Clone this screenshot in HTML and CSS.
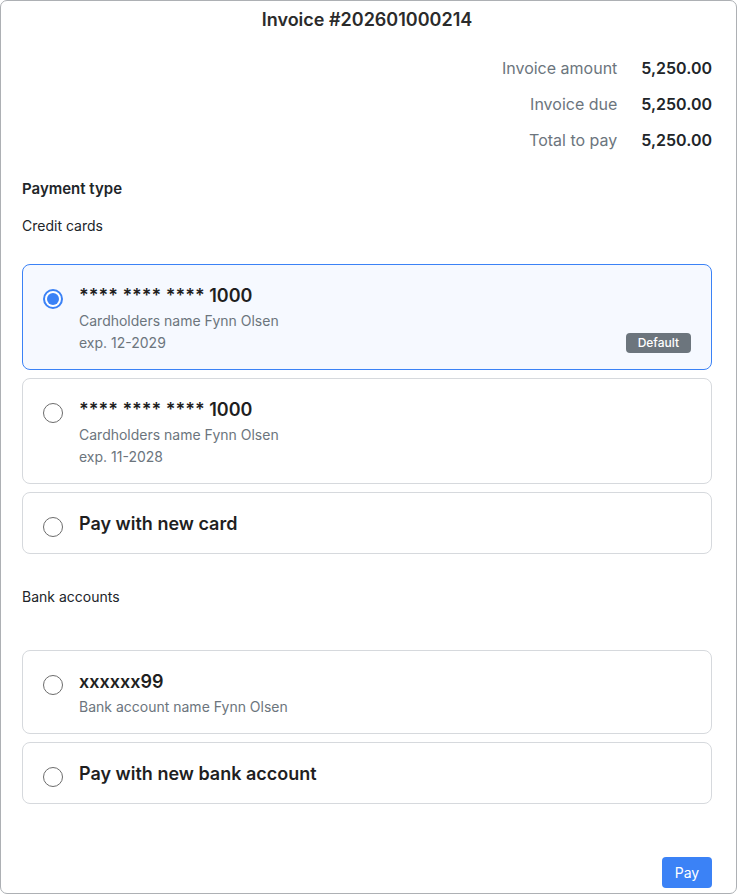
FILE: index.html
```html
<!DOCTYPE html>
<html>
<head>
<meta charset="utf-8">
<link rel="stylesheet" href="styles.css">
</head>
<body>
<div class="frame">
  <h1 class="title">Invoice #202601000214</h1>
  <div class="summary">
    <div class="sum-row"><span class="sum-label">Invoice amount</span><span class="sum-value">5,250.00</span></div>
    <div class="sum-row"><span class="sum-label">Invoice due</span><span class="sum-value">5,250.00</span></div>
    <div class="sum-row"><span class="sum-label">Total to pay</span><span class="sum-value">5,250.00</span></div>
  </div>
  <h2 class="section-title">Payment type</h2>
  <div class="group-label">Credit cards</div>
  <div class="options">
    <label class="option selected">
      <span class="radio checked"></span>
      <span class="opt-body">
        <span class="opt-title">**** **** **** 1000</span>
        <span class="opt-sub">Cardholders name Fynn Olsen</span>
        <span class="opt-sub">exp. 12-2029</span>
      </span>
      <span class="badge">Default</span>
    </label>
    <label class="option">
      <span class="radio"></span>
      <span class="opt-body">
        <span class="opt-title">**** **** **** 1000</span>
        <span class="opt-sub">Cardholders name Fynn Olsen</span>
        <span class="opt-sub">exp. 11-2028</span>
      </span>
    </label>
    <label class="option">
      <span class="radio"></span>
      <span class="opt-body">
        <span class="opt-title">Pay with new card</span>
      </span>
    </label>
  </div>
  <div class="group-label bank">Bank accounts</div>
  <div class="options bank-options">
    <label class="option">
      <span class="radio"></span>
      <span class="opt-body">
        <span class="opt-title">xxxxxx99</span>
        <span class="opt-sub">Bank account name Fynn Olsen</span>
      </span>
    </label>
    <label class="option">
      <span class="radio"></span>
      <span class="opt-body">
        <span class="opt-title">Pay with new bank account</span>
      </span>
    </label>
  </div>
  <div class="actions">
    <button class="pay-btn">Pay</button>
  </div>
</div>
</body>
</html>
```
FILE: styles.css
```css
* { box-sizing: border-box; }
html, body { margin: 0; padding: 0; background: #fff; }
body {
  font-family: Inter, "Noto Sans", "Liberation Sans", sans-serif;
  color: #212529;
}
.frame {
  width: 737px;
  height: 894px;
  border: 1px solid #adb0b4;
  border-radius: 7px;
  padding: 0 24px 0 21px;
  display: flex;
  flex-direction: column;
}
.title {
  margin: 0;
  font-size: 18px;
  font-weight: 600;
  line-height: 38px;
  text-align: center;
  color: #2b2b2b;
}
.summary {
  margin-top: 11px;
  display: flex;
  flex-direction: column;
}
.sum-row {
  display: flex;
  justify-content: flex-end;
  align-items: center;
  height: 36px;
  gap: 24px;
  font-size: 16px;
}
.sum-label { color: #6c757d; }
.sum-value { font-weight: 600; color: #212529; }
.section-title {
  margin: 20px 0 0;
  font-size: 15px;
  font-weight: 600;
  line-height: 22px;
}
.group-label {
  margin-top: 16px;
  font-size: 14px;
  line-height: 20px;
}
.group-label.bank { margin-top: 33px; }
.options {
  margin-top: 28px;
  display: flex;
  flex-direction: column;
  gap: 8px;
}
.bank-options { margin-top: 43px; }
.option {
  position: relative;
  display: flex;
  align-items: flex-start;
  gap: 16px;
  padding: 16px 20px 15px;
  border: 1px solid #d6d9dd;
  border-radius: 8px;
  background: #fff;
}
.option.selected {
  border-color: #3b82f6;
  background: #f6f9ff;
}
.radio {
  flex: none;
  width: 20px;
  height: 20px;
  margin-top: 8px;
  border: 1px solid #6c6c6c;
  border-radius: 50%;
  background: #fff;
  position: relative;
}
.radio.checked {
  border: 2px solid #3b82f6;
}
.radio.checked::after {
  content: "";
  position: absolute;
  left: 2px;
  top: 2px;
  width: 12px;
  height: 12px;
  border-radius: 50%;
  background: #3b82f6;
}
.opt-body {
  display: flex;
  flex-direction: column;
}
.opt-title {
  font-size: 18px;
  font-weight: 600;
  line-height: 29px;
  color: #1f1f1f;
}
.opt-sub {
  font-size: 14px;
  line-height: 22px;
  color: #6c757d;
}
.badge {
  position: absolute;
  right: 20px;
  bottom: 16px;
  height: 20px;
  padding: 0 12px;
  border-radius: 4px;
  background: #6c757d;
  color: #fff;
  font-size: 12px;
  line-height: 20px;
  font-weight: 500;
}
.actions {
  margin-top: auto;
  margin-bottom: 5px;
  display: flex;
  justify-content: flex-end;
}
.pay-btn {
  width: 50px;
  height: 31px;
  border: 0;
  border-radius: 4px;
  background: #3b82f6;
  color: #fff;
  font-family: inherit;
  font-size: 14px;
  padding: 0;
}
```
